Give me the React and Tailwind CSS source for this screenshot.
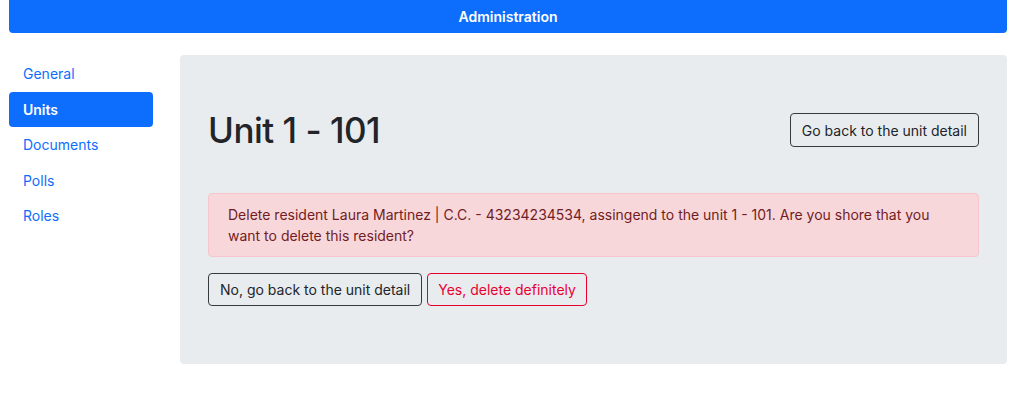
import React from 'react';

const navItems = ['General', 'Units', 'Documents', 'Polls', 'Roles'];

export default function App() {
  return (
    <div className="min-h-[394px] bg-white font-['Inter',sans-serif] text-[#212529] text-[14px]">
      {/* Top bar */}
      <div className="ml-[9px] w-[998px] h-[33px] bg-[#0d6efd] rounded-b-[4px] flex items-center justify-center">
        <span className="text-white font-semibold text-[14px]">Administration</span>
      </div>

      <div className="ml-[9px] w-[998px] mt-[22px] flex gap-[27px]">
        {/* Sidebar */}
        <nav className="w-[144px] pt-[1px] flex flex-col">
          {navItems.map((item) => (
            <a
              key={item}
              href="#"
              className={`h-[35.5px] px-[14px] flex items-center rounded-[4px] ${
                item === 'Units' ? 'bg-[#0d6efd] text-white font-semibold' : 'text-[#0d6efd]'
              }`}
            >
              {item}
            </a>
          ))}
        </nav>

        {/* Main panel */}
        <div className="flex-1 bg-[#e9ecef] rounded-[4px] px-[28px] pt-[58px] pb-[58px]">
          <div className="flex items-center justify-between h-[34px]">
            <h1 className="text-[35px] font-medium leading-[34px] tracking-[-0.5px]">Unit 1 - 101</h1>
            <button className="h-[34px] px-[11px] border border-[#343a40] rounded-[4px] text-[#212529]">
              Go back to the unit detail
            </button>
          </div>

          <div className="mt-[46px] border border-[#f5c6cb] bg-[#f8d7da] text-[#721c24] rounded-[4px] px-[19px] py-[10px] leading-[21px]">
            Delete resident Laura Martinez | C.C. - 43234234534, assingend to the unit 1 - 101. Are you shore that you want to delete this resident?
          </div>

          <div className="mt-[16px] flex gap-[5px]">
            <button className="h-[33px] px-[11px] border border-[#343a40] rounded-[4px] text-[#212529]">
              No, go back to the unit detail
            </button>
            <button className="h-[33px] px-[10px] border border-[#e8002d] rounded-[4px] text-[#e8002d]">
              Yes, delete definitely
            </button>
          </div>
        </div>
      </div>
    </div>
  );
}
